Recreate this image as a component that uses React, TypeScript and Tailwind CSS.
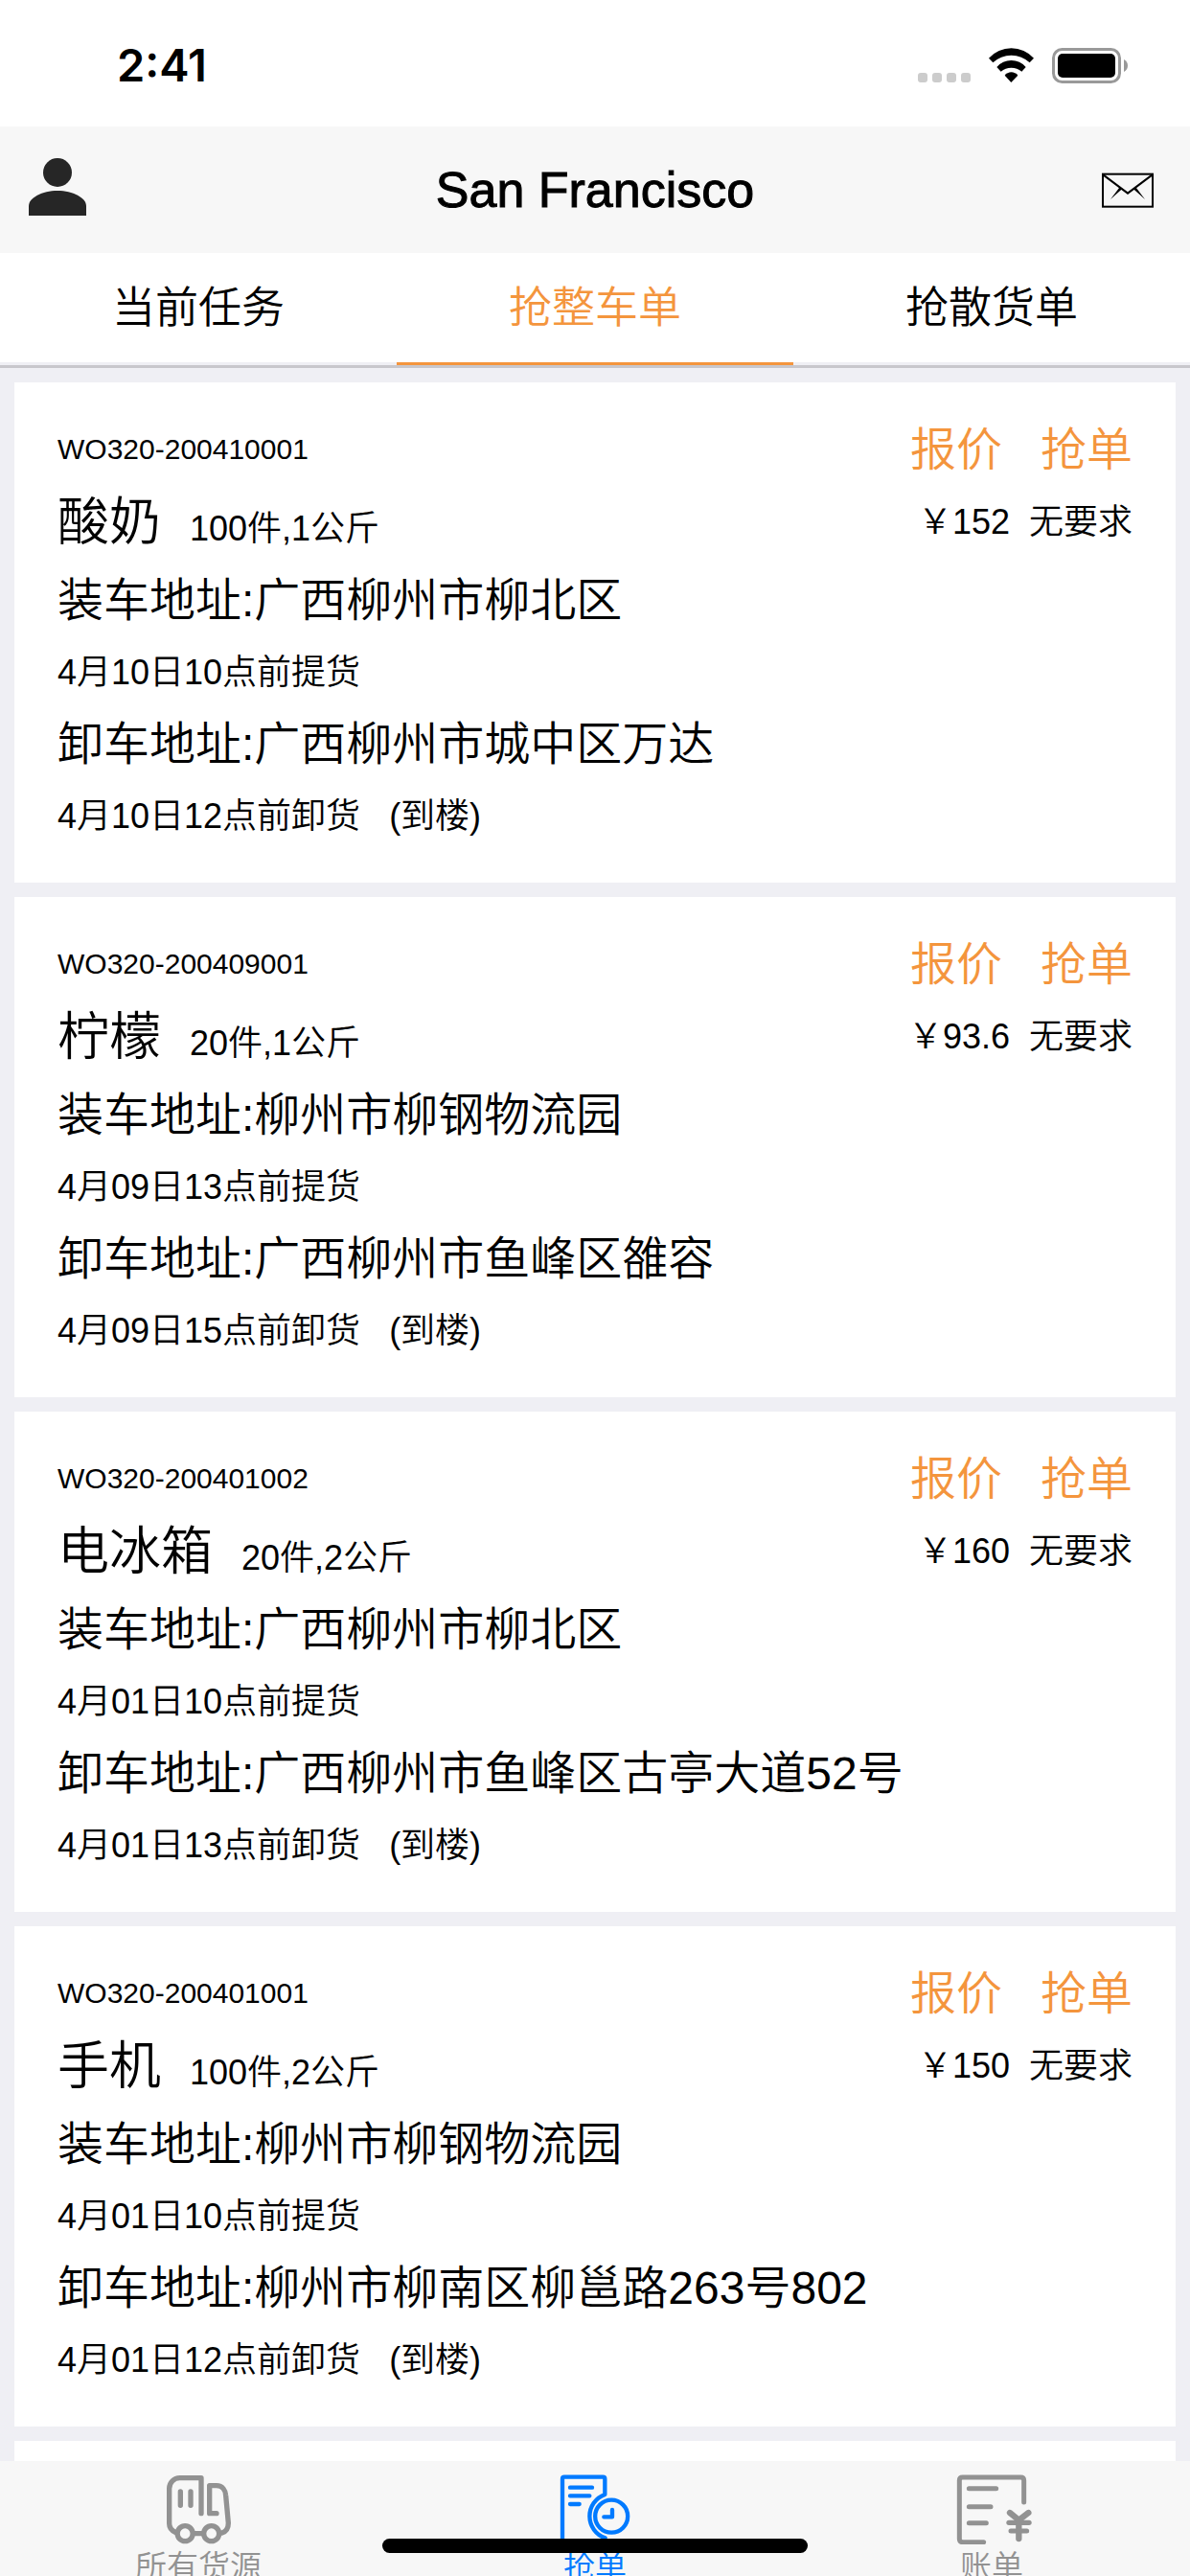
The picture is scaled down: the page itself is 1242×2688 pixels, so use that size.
import { useState, type ReactNode } from "react";

interface Order {
  id: string;
  goods: string;
  amount: string;
  price: string;
  loadAddress: string;
  loadTime: string;
  unloadAddress: string;
  unloadTime: string;
}

const orders: Order[] = [
  {
    id: "WO320-200410001",
    goods: "酸奶",
    amount: "100件,1公斤",
    price: "152",
    loadAddress: "广西柳州市柳北区",
    loadTime: "4月10日10点",
    unloadAddress: "广西柳州市城中区万达",
    unloadTime: "4月10日12点",
  },
  {
    id: "WO320-200409001",
    goods: "柠檬",
    amount: "20件,1公斤",
    price: "93.6",
    loadAddress: "柳州市柳钢物流园",
    loadTime: "4月09日13点",
    unloadAddress: "广西柳州市鱼峰区雒容",
    unloadTime: "4月09日15点",
  },
  {
    id: "WO320-200401002",
    goods: "电冰箱",
    amount: "20件,2公斤",
    price: "160",
    loadAddress: "广西柳州市柳北区",
    loadTime: "4月01日10点",
    unloadAddress: "广西柳州市鱼峰区古亭大道52号",
    unloadTime: "4月01日13点",
  },
  {
    id: "WO320-200401001",
    goods: "手机",
    amount: "100件,2公斤",
    price: "150",
    loadAddress: "柳州市柳钢物流园",
    loadTime: "4月01日10点",
    unloadAddress: "柳州市柳南区柳邕路263号802",
    unloadTime: "4月01日12点",
  },
];

const topTabs = ["当前任务", "抢整车单", "抢散货单"];

export default function App() {
  const [activeTab, setActiveTab] = useState(1);

  return (
    <div
      lang="zh-CN"
      className="relative flex h-screen flex-col overflow-hidden bg-[#efeff4] font-['Liberation_Sans','Noto_Sans_CJK_SC',sans-serif] font-[350] text-black"
    >
      <StatusBar />
      <header className="grid h-[132px] shrink-0 grid-cols-[1fr_auto_1fr] items-center bg-[#f7f7f7] px-[30px]">
        <button type="button" aria-label="我的" className="mb-1.5 justify-self-start">
          <PersonIcon />
        </button>
        <h1 className="text-[52px] leading-[60px] font-normal [-webkit-text-stroke:1px_black]">San Francisco</h1>
        <button type="button" aria-label="消息" className="mr-2 justify-self-end">
          <MailIcon />
        </button>
      </header>
      <nav className="grid shrink-0 grid-cols-3 border-b-3 border-[#c8c7cc]">
        {topTabs.map((tab, index) => (
          <button
            key={tab}
            type="button"
            onClick={() => setActiveTab(index)}
            className={`h-[117px] border-b-3 bg-white bg-clip-padding pt-0.5 text-[45px] leading-[60px] ${
              index === activeTab ? "border-[#f4953d] text-[#f4953d]" : "border-transparent"
            }`}
          >
            {tab}
          </button>
        ))}
      </nav>
      <main className="flex flex-1 flex-col gap-[15px] overflow-hidden px-[15px] pt-[15px]">
        {orders.map((order) => (
          <OrderCard key={order.id} order={order} />
        ))}
        <div className="flex-1 bg-white" />
      </main>
      <footer className="grid h-[120px] shrink-0 grid-cols-3 overflow-hidden bg-[#f7f7f7] text-[#929292]">
        <BottomTab label="所有货源">
          <TruckIcon />
        </BottomTab>
        <BottomTab label="抢单" active>
          <GrabIcon />
        </BottomTab>
        <BottomTab label="账单">
          <BillIcon />
        </BottomTab>
      </footer>
      <div className="absolute bottom-6 left-1/2 h-[15px] w-[444px] -translate-x-1/2 rounded-full bg-black" />
    </div>
  );
}

function OrderCard({ order }: { order: Order }) {
  return (
    <article className="shrink-0 bg-white px-[45px] py-8 text-[36px]">
      <div className="flex h-[76px] items-center justify-between leading-[76px]">
        <span className="text-[30px]">{order.id}</span>
        <div className="flex gap-10 pt-0.5 text-[48px] text-[#f4953d]">
          <button type="button">报价</button>
          <button type="button">抢单</button>
        </div>
      </div>
      <div className="mb-1.5 flex h-[76px] justify-between leading-[76px]">
        <div className="flex items-baseline gap-[30px]">
          <h2 className="text-[54px] font-[350]">{order.goods}</h2>
          <span>{order.amount}</span>
        </div>
        <div className="flex gap-5">
          <span>￥{order.price}</span>
          <span>无要求</span>
        </div>
      </div>
      <p className="text-[48px] leading-[75px]">装车地址:{order.loadAddress}</p>
      <p className="leading-[75px]">{order.loadTime}前提货</p>
      <p className="text-[48px] leading-[75px]">卸车地址:{order.unloadAddress}</p>
      <p className="flex gap-[30px] leading-[75px]">
        <span>{order.unloadTime}前卸货</span>
        <span>(到楼)</span>
      </p>
    </article>
  );
}

function BottomTab({ label, active, children }: { label: string; active?: boolean; children: ReactNode }) {
  return (
    <a href="#" className={`flex flex-col items-center pt-3 text-[33px] leading-[48px] ${active ? "text-[#007aff]" : ""}`}>
      {children}
      <span>{label}</span>
    </a>
  );
}

function StatusBar() {
  return (
    <div className="flex h-[132px] shrink-0 items-center justify-between bg-white pt-1 pr-16 pl-[122px]">
      <span className="font-['Inter',sans-serif] text-[47px] leading-[60px] font-semibold">2:41</span>
      <svg viewBox="174 147 660 111" className="h-[37px] w-[220px]">
        <g fill="#ccc">
          <rect x="174" y="225" width="30" height="30" rx="9" />
          <rect x="219" y="225" width="30" height="30" rx="9" />
          <rect x="264" y="225" width="30" height="30" rx="9" />
          <rect x="309" y="225" width="30" height="30" rx="9" />
        </g>
        <path d="M396 179A95 95 0 0 1 537 179L524 193A84 84 0 0 0 409 193Z" />
        <path d="M421 207A60 60 0 0 1 512 207L499 221A50 50 0 0 0 434 221Z" />
        <path d="M446 233A26 26 0 0 1 487 233L466 255Z" />
        <rect x="598.5" y="151.5" width="207" height="102" rx="27" fill="none" stroke="#999" strokeWidth="9" />
        <rect x="612" y="165" width="180" height="75" rx="15" />
        <path d="M819 183Q831 190 831 202.500Q831 215 819 222Z" fill="#999" />
      </svg>
    </div>
  );
}

function PersonIcon() {
  return (
    <svg viewBox="90 495 180 180" fill="#262626" className="size-15">
      <circle cx="180" cy="540" r="45" />
      <path d="M90 675V645C90 619 132 597 180 597S270 619 270 645V675Z" />
    </svg>
  );
}

function MailIcon() {
  return (
    <svg viewBox="747 540 162 111" className="h-[37px] w-[54px]">
      <rect x="750" y="545" width="156" height="102" fill="none" stroke="black" strokeWidth="6" />
      <path d="M751 547L828 605L905 547" fill="none" stroke="black" strokeWidth="6" />
      <path d="M803 586L774 624L810 592Z" />
      <path d="M853 586L882 624L846 592Z" />
    </svg>
  );
}

function TruckIcon() {
  return (
    <svg
      viewBox="135 180 252 225"
      fill="none"
      stroke="currentColor"
      strokeWidth="16"
      strokeLinecap="round"
      strokeLinejoin="round"
      className="h-[75px] w-[84px]"
    >
      <path d="M270 308V197H203A33 33 0 0 0 170 230V340Q170 359 190 368" />
      <path d="M318 308H296V221H318C337 221 346 236 347 252L355 338Q355 362 335 369" />
      <path d="M205 240V283M237 240V283M250 371H272" />
      <circle cx="219.500" cy="371" r="24" />
      <circle cx="302" cy="371" r="24" />
    </svg>
  );
}

function GrabIcon() {
  return (
    <svg
      viewBox="117 180 252 225"
      fill="none"
      stroke="currentColor"
      strokeWidth="13"
      strokeLinecap="round"
      strokeLinejoin="round"
      className="h-[75px] w-[84px]"
    >
      <path d="M274 395H141V200Q141 194 147 194H268Q274 194 274 200V249A72 72 0 0 0 275 385" />
      <path d="M165 227H234M165 253H226M165 279H194" />
      <circle cx="294.500" cy="317" r="51" />
      <path d="M297 297V319H271" />
    </svg>
  );
}

function BillIcon() {
  return (
    <svg
      viewBox="159 180 252 225"
      fill="none"
      stroke="currentColor"
      strokeWidth="15"
      strokeLinecap="round"
      strokeLinejoin="round"
      className="h-[75px] w-[84px]"
    >
      <path d="M386 273V205Q386 195 376 195H194Q184 195 184 205V388Q184 398 194 398H260" />
      <path d="M214 230H299M214 287H282M214 338H268M345 363H395" />
      <path d="M339 337H402" strokeWidth="16" />
      <path d="M342 306L370 329L400 306M370 329V387" strokeWidth="19" />
    </svg>
  );
}
